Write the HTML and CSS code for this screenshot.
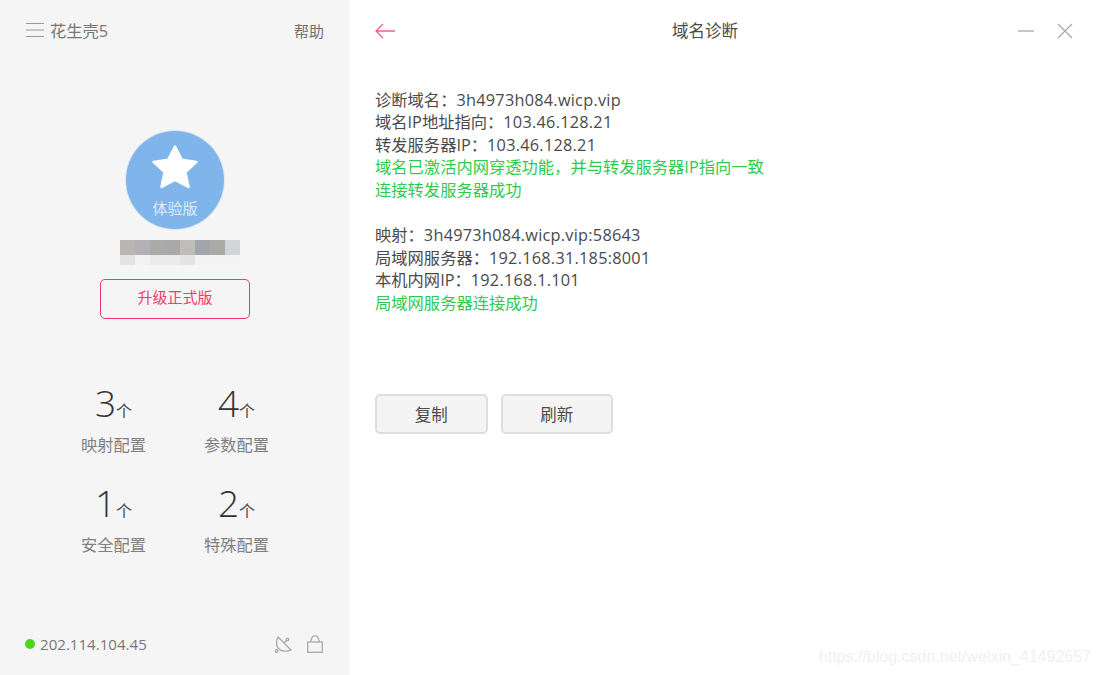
FILE: index.html
```html
<!DOCTYPE html>
<html lang="zh-CN">
<head>
<meta charset="utf-8">
<title>花生壳5</title>
<link rel="stylesheet" href="styles.css">
</head>
<body>
<div class="app">
  <aside class="side">
    <header class="side-top">
      <div class="brand">
        <svg class="menu" width="18" height="16" viewBox="0 0 18 16"><path d="M0 1.500h18M0 8h18M0 14.500h18" stroke="#9a9a9a" stroke-width="1.200" fill="none"/></svg>
        <span>花生壳5</span>
      </div>
      <span class="help">帮助</span>
    </header>
    <div class="badge">
      <svg class="star" width="50" height="46" viewBox="0 0 50 46"><path d="M25 2.500 31.800 15.800 46.500 17.900 35.500 28.200 38.500 43 25 36 11.500 43 14.500 28.200 3.500 17.900 18.200 15.800Z" fill="#fff" stroke="#fff" stroke-width="2.500" stroke-linejoin="round"/></svg>
      <span class="badge-label">体验版</span>
    </div>
    <div class="mosaic">
      <i class="m1"></i><i class="m2"></i><i class="m3"></i><i class="m4"></i><i class="m5"></i><i class="m6"></i><i class="m7"></i><i class="m8"></i>
      <i class="n1"></i><i class="n2"></i><i class="n3"></i><i class="n3"></i><i class="n1"></i><i class="n2"></i><i class="n2"></i><i class="n2"></i>
    </div>
    <button class="upgrade">升级正式版</button>
    <div class="stats">
      <div class="stat"><div class="count"><b>3</b><span>个</span></div><div class="name">映射配置</div></div>
      <div class="stat"><div class="count"><b>4</b><span>个</span></div><div class="name">参数配置</div></div>
      <div class="stat"><div class="count"><b>1</b><span>个</span></div><div class="name">安全配置</div></div>
      <div class="stat"><div class="count"><b>2</b><span>个</span></div><div class="name">特殊配置</div></div>
    </div>
    <footer class="side-foot">
      <div class="ip"><i class="dot"></i><span>202.114.104.45</span></div>
      <div class="foot-icons">
        <svg width="18" height="18" viewBox="0 0 18 18" fill="none" stroke="#a8a8a8" stroke-width="1.300"><path d="M4 2 17 15C13 17 7 16.500 4 13 2 10 2 5 4 2Z"/><path d="M10 8 12.700 5.300"/><circle cx="13.500" cy="4.500" r="1.300"/><circle cx="2.700" cy="16" r="1.300"/></svg>
        <svg width="16" height="18" viewBox="0 0 16 18" fill="none" stroke="#a8a8a8" stroke-width="1.300"><rect x="0.700" y="7" width="14.600" height="10.300"/><path d="M3.500 7 5 2.500C5.500 1.300 6.500.8 8 .8S10.500 1.300 11 2.500L12.500 7"/></svg>
      </div>
    </footer>
  </aside>
  <main class="main">
    <header class="main-top">
      <svg width="20" height="16" viewBox="0 0 20 16" fill="none" stroke="#f0608c" stroke-width="1.300"><path d="M20 8H1M8 1 1 8 8 15"/></svg>
      <h1>域名诊断</h1>
      <div class="win">
        <svg width="16" height="16" viewBox="0 0 16 16" fill="none" stroke="#a8a8a8" stroke-width="1.300"><path d="M0 8h16"/></svg>
        <svg width="16" height="16" viewBox="0 0 16 16" fill="none" stroke="#a8a8a8" stroke-width="1.200"><path d="M1 1 15 15M15 1 1 15"/></svg>
      </div>
    </header>
    <section class="log">
      <p>诊断域名：<span class="v">3h4973h084.wicp.vip</span></p>
      <p>域名IP地址指向：<span class="v">103.46.128.21</span></p>
      <p>转发服务器IP：<span class="v">103.46.128.21</span></p>
      <p class="ok">域名已激活内网穿透功能，并与转发服务器IP指向一致</p>
      <p class="ok">连接转发服务器成功</p>
      <p class="gap">&nbsp;</p>
      <p>映射：<span class="v">3h4973h084.wicp.vip:58643</span></p>
      <p>局域网服务器：<span class="v">192.168.31.185:8001</span></p>
      <p>本机内网IP：<span class="v">192.168.1.101</span></p>
      <p class="ok">局域网服务器连接成功</p>
    </section>
    <div class="actions">
      <button class="btn">复制</button>
      <button class="btn">刷新</button>
    </div>
    <div class="watermark">https://blog.csdn.net/weixin_41492657</div>
  </main>
</div>
</body>
</html>
```
FILE: styles.css
```css
* { box-sizing: border-box; }
html, body { margin: 0; height: 100%; background: #fff; }
body { font-family: "Open Sans", "Noto Sans CJK SC", sans-serif; color: #4a4a4a; }
.app { display: flex; width: 1100px; height: 675px; overflow: hidden; }

.side { width: 350px; flex: none; background: #f5f5f5; display: flex; flex-direction: column; align-items: center; padding: 0 26px; }
.side-top { width: 100%; display: flex; justify-content: space-between; align-items: center; height: 32px; margin-top: 15px; }
.brand { display: flex; align-items: center; gap: 6px; font-size: 16.300px; color: #777; margin-top: -2px; }
.help { font-size: 15px; color: #707070; line-height: 20px; }
.badge { width: 98px; height: 98px; margin-top: 84px; border-radius: 50%; background: #7fb5eb; box-shadow: 0 0 0 1px #dfe6ee; display: flex; flex-direction: column; align-items: center; }
.star { margin-top: 13px; }
.badge-label { font-size: 15px; line-height: 20px; color: #dcebfa; margin-top: 8px; }
.mosaic { display: grid; grid-template-columns: repeat(8, 15px); grid-template-rows: 15px 10px; margin-top: 11px; margin-left: 10px; filter: blur(.4px); }
.mosaic i { display: block; }
.m1 { background: #b9b5b2; } .m2 { background: #b2b1b4; } .m3 { background: #acaaa8; } .m4 { background: #a9a9aa; }
.m5 { background: #bfbdb9; } .m6 { background: #a2a5a9; } .m7 { background: #acaaa7; } .m8 { background: #d3d4d6; }
.n1 { background: #e3e3e3; } .n2 { background: #f3f3f3; } .n3 { background: #ebebeb; }
.upgrade { width: 150px; height: 40px; margin-top: 14px; background: transparent; border: 1.500px solid #f5386e; border-radius: 5px; color: #f5386e; font: 15px/34px "Noto Sans CJK SC", sans-serif; padding: 0 0 4px; }
.stats { display: grid; grid-template-columns: 123px 123px; grid-auto-rows: 100px; justify-content: center; margin-top: 60px; }
.stat { display: flex; flex-direction: column; align-items: center; }
.count { display: flex; align-items: baseline; height: 48px; color: #333; }
.count b { font-weight: 300; font-size: 37px; line-height: 48px; }
.count span { font-size: 16px; color: #4a4a4a; }
.name { font-size: 16.300px; line-height: 24px; color: #808080; margin-top: 6px; }
.side-foot { margin-top: auto; width: 100%; display: flex; justify-content: space-between; align-items: center; height: 22px; margin-bottom: 20px; }
.ip { display: flex; align-items: center; gap: 5px; font-size: 15.100px; color: #787878; margin-left: -1px; }
.dot { width: 10px; height: 10px; border-radius: 50%; background: #4ed61a; }
.foot-icons { display: flex; align-items: center; gap: 15px; margin-right: 1px; }

.main { flex: 1; position: relative; padding: 0 25px; }
.main-top { display: flex; align-items: center; justify-content: space-between; height: 32px; margin-top: 15px; position: relative; }
.main-top h1 { font-size: 16.500px; font-weight: 400; color: #4a4a4a; margin: 0; position: absolute; left: 297px; top: 4px; line-height: 24px; }
.win { display: flex; align-items: center; gap: 23px; margin-right: 2px; }
.log { margin-top: 41.500px; font-size: 16.300px; line-height: 22.600px; color: #4a4a4a; }
.log p { margin: 0; white-space: nowrap; }
.log .v { letter-spacing: .25px; }
.log .ok { color: #2ecb4e; }
.actions { display: flex; gap: 13px; margin-top: 79.500px; }
.btn { width: 112.500px; height: 40px; background: #f4f4f4; border: 2px solid #dedede; border-radius: 5px; font: 16.500px "Noto Sans CJK SC", sans-serif; color: #4a4a4a; padding: 0; }
.watermark { position: absolute; right: 9px; bottom: 9px; font: 16px "Liberation Sans", sans-serif; color: #f0f0f0; white-space: nowrap; }
```
